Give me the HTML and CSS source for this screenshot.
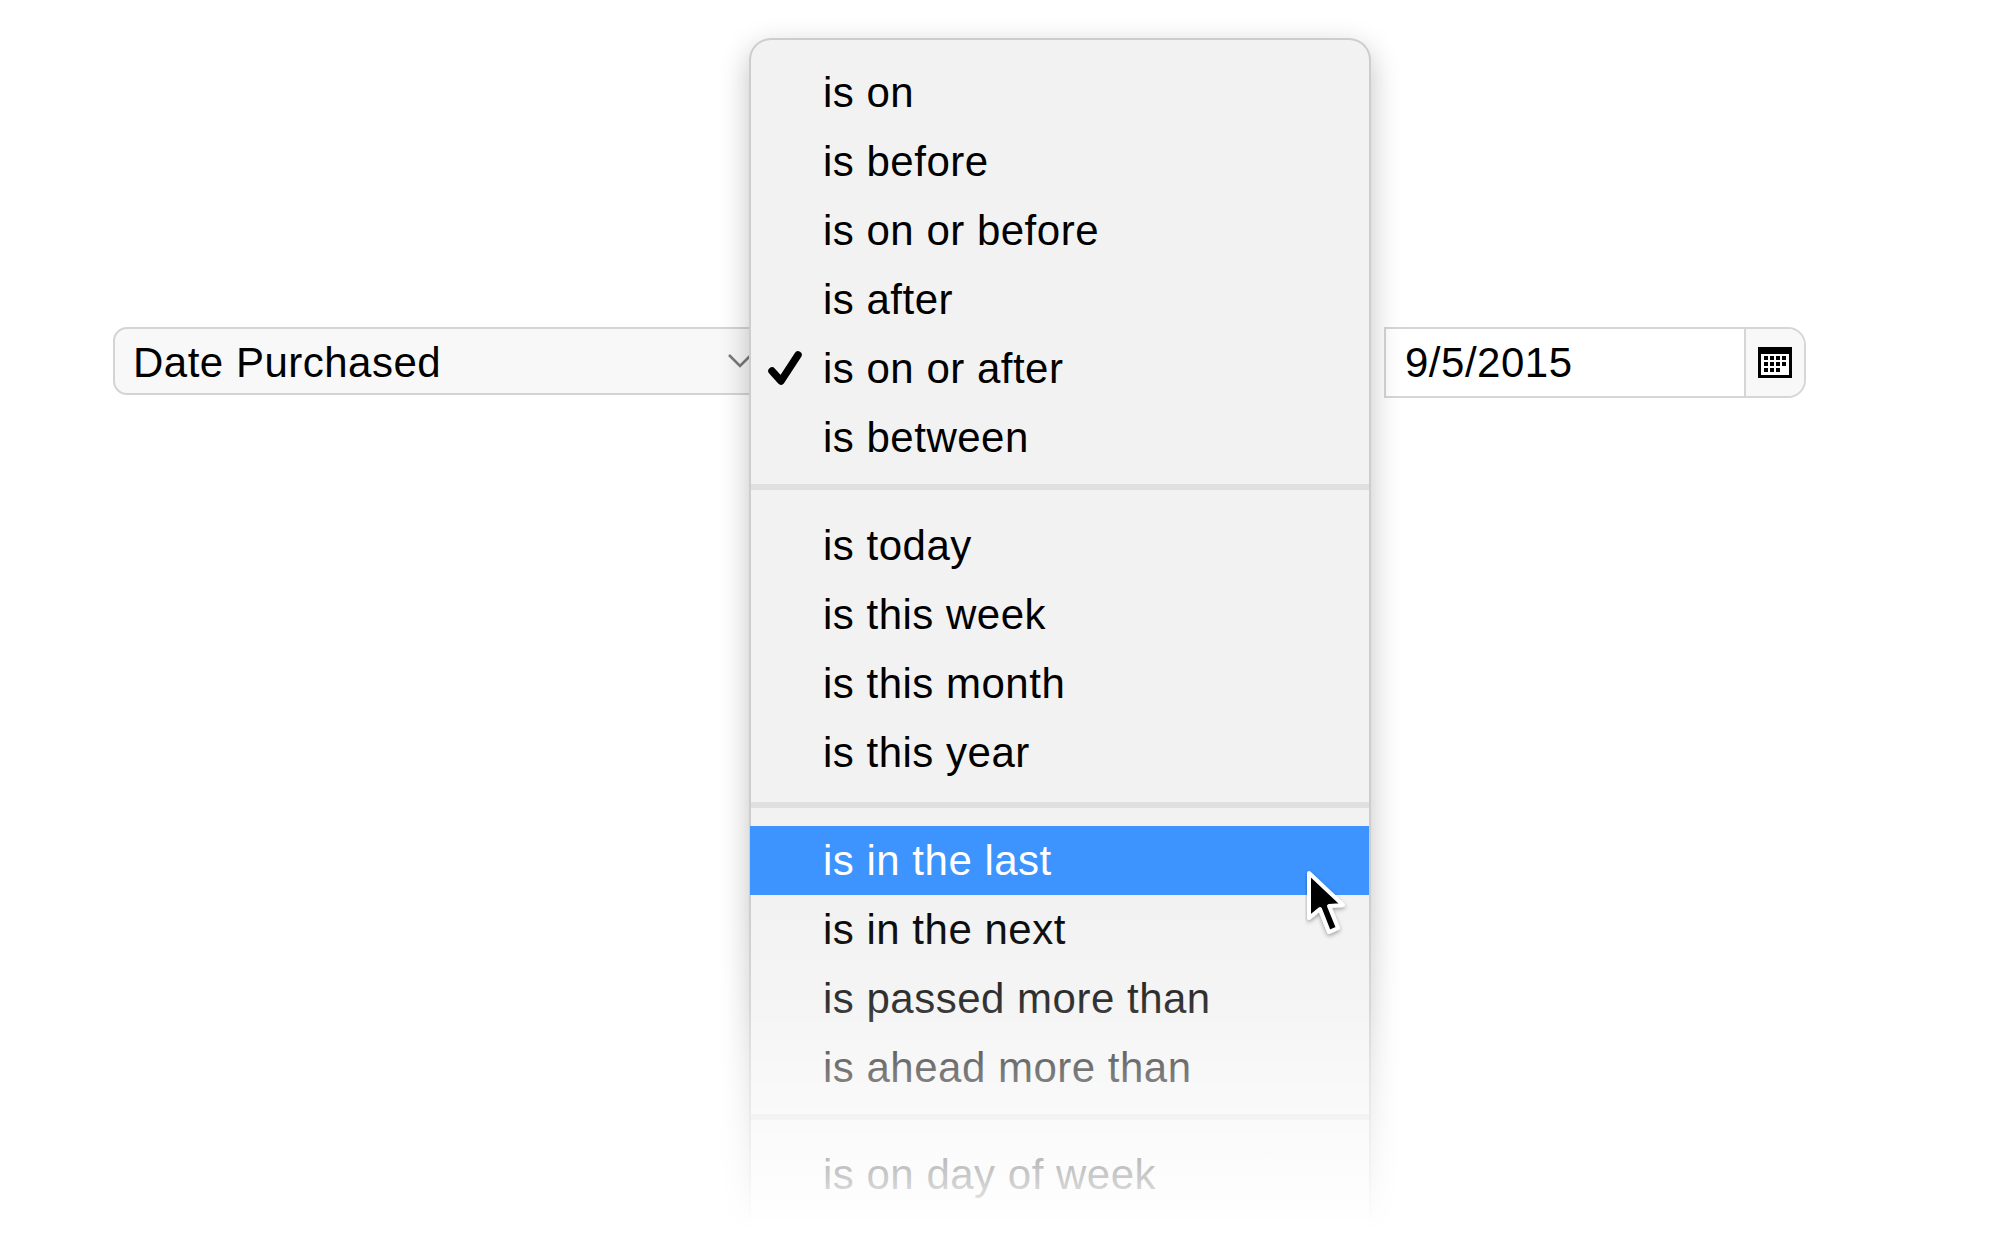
FILE: index.html
```html
<!DOCTYPE html>
<html lang="en">
<head>
<meta charset="utf-8">
<title>Date Purchased filter</title>
<link rel="stylesheet" href="styles.css">
</head>
<body>
<main class="stage">
  <div class="filter-row">
    <div class="select">
      <span>Date Purchased</span>
      <svg class="chevron" viewBox="0 0 26 16" width="26" height="16"><path d="M2 2 L13 13 L24 2" fill="none" stroke="#7a7a7a" stroke-width="2.6"/></svg>
    </div>
    <div class="date-input">
      <span class="date-value">9/5/2015</span>
      <span class="date-btn">
        <svg viewBox="0 0 34 31" width="34" height="31">
          <rect width="34" height="31" fill="#000"/>
          <rect x="3" y="7" width="28" height="21" fill="#fff"/>
          <path d="M6 9h4v4H6zM12 9h4v4h-4zM18 9h4v4h-4zM24 9h4v4h-4zM6 15h4v4H6zM12 15h4v4h-4zM18 15h4v4h-4zM24 15h4v4h-4zM6 21h4v4H6zM12 21h4v4h-4zM18 21h4v4h-4z" fill="#000"/>
        </svg>
      </span>
    </div>
  </div>

  <div class="menu">
    <ul class="group">
      <li>is on</li>
      <li>is before</li>
      <li>is on or before</li>
      <li>is after</li>
      <li class="checked">
        <svg class="check" viewBox="0 0 36 36" width="36" height="36"><path d="M5 21 L14 31 L31 5" fill="none" stroke="#000" stroke-width="7.5" stroke-linecap="round" stroke-linejoin="round"/></svg>
        is on or after
      </li>
      <li>is between</li>
    </ul>
    <hr class="sep sep-first">
    <ul class="group">
      <li>is today</li>
      <li>is this week</li>
      <li>is this month</li>
      <li>is this year</li>
    </ul>
    <hr class="sep sep-second">
    <ul class="group">
      <li class="active">is in the last</li>
      <li>is in the next</li>
      <li>is passed more than</li>
      <li>is ahead more than</li>
    </ul>
    <hr class="sep sep-last">
    <ul class="group">
      <li>is on day of week</li>
    </ul>
  </div>
  <div class="fade"></div>

  <svg class="cursor" viewBox="0 0 44 72" width="44" height="72">
    <defs>
      <filter id="cursor-shadow" x="-30%" y="-30%" width="160%" height="160%"><feDropShadow dx="0" dy="2" stdDeviation="2" flood-color="#000" flood-opacity=".35"/></filter>
    </defs>
    <path d="M4 3 L4 48 L15 39 L24 62 L33 58 L24 36 L38 35 Z" fill="#000" stroke="#fff" stroke-width="4" stroke-linejoin="round" filter="url(#cursor-shadow)"/>
  </svg>
</main>
</body>
</html>
```
FILE: styles.css
```css
* { box-sizing: border-box; }
html, body { margin: 0; padding: 0; background: #fff; }
body {
  font-family: "Liberation Sans", Arial, sans-serif;
  font-size: 42px;
  letter-spacing: 0.5px;
  color: #000;
}
.stage {
  position: relative;
  width: 2001px;
  height: 1260px;
  overflow: hidden;
}
.filter-row {
  display: flex;
  justify-content: space-between;
  align-items: flex-start;
  padding: 327px 195px 0 113px;
}
.select {
  display: flex;
  align-items: center;
  justify-content: space-between;
  width: 650px;
  height: 68px;
  padding: 0 0 0 18px;
  background: #f8f8f8;
  border: 2px solid #d4d4d4;
  border-radius: 14px 0 0 14px;
}
.select span { padding-top: 3px; }
.chevron { margin-right: 8px; }
.date-input {
  display: flex;
  align-items: stretch;
  width: 422px;
  height: 71px;
  background: #fff;
  border: 2px solid #d6d6d6;
  border-radius: 0 18px 18px 0;
}
.date-value {
  flex: 1;
  display: flex;
  align-items: center;
  padding-left: 19px;
}
.date-btn {
  flex: none;
  width: 60px;
  display: flex;
  align-items: center;
  justify-content: center;
  background: #f8f8f8;
  border-left: 2px solid #d6d6d6;
  border-radius: 0 16px 16px 0;
}
.menu {
  position: absolute;
  left: 749px;
  top: 38px;
  width: 622px;
  height: 1195px;
  padding-top: 18px;
  background: #f2f2f2;
  border: 2px solid #cdcdcd;
  border-width: 2px 2px 0 2px;
  border-radius: 22px 22px 0 0;
  box-shadow: 0 10px 30px rgba(0, 0, 0, .24);
}
.group {
  list-style: none;
  margin: 0;
  padding: 0;
}
.group li {
  position: relative;
  height: 69px;
  line-height: 69px;
  padding-left: 72px;
}
.group li.active {
  margin-left: -1px;
  padding-left: 73px;
  background: #3d94ff;
  color: #fff;
}
.check {
  position: absolute;
  left: 16px;
  top: 16px;
}
.sep {
  height: 6px;
  border: 0;
  background: #e0e0e0;
}
.sep-first { margin: 12px 0 21px; }
.sep-second { margin: 15px 0 18px; }
.sep-last { margin: 12px 0 20px; }
.fade {
  position: absolute;
  left: 700px;
  right: 560px;
  top: 900px;
  bottom: 0;
  background: linear-gradient(to bottom, rgba(255,255,255,0) 0, rgba(255,255,255,.2) 103px, rgba(255,255,255,.47) 172px, rgba(255,255,255,.8) 280px, #fff 330px);
}
.cursor {
  position: absolute;
  left: 1305px;
  top: 870px;
}
```
